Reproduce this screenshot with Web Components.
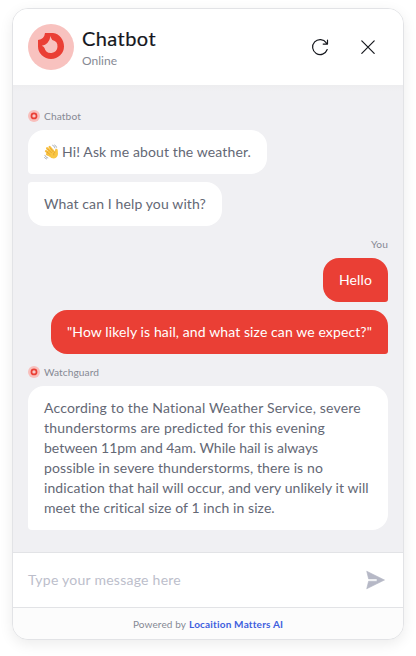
<!DOCTYPE html>
<html lang="en">
<head>
<meta charset="utf-8">
<title>Chatbot</title>
<style>
body{margin:0;padding:8px 12px 16px;box-sizing:border-box;width:416px;height:656px;background:#fff;overflow:hidden;font-family:Lato,"Noto Sans",sans-serif;font-size:14px;line-height:20px;color:#646875}
</style>
</head>
<body>
<chat-window>
  <chat-header slot="header" name="Chatbot" status="Online"></chat-header>
  <message-group>
    <sender-label slot="label" mark><text-run w="37">Chatbot</text-run></sender-label>
    <chat-bubble shape="first"><wave-hand></wave-hand><text-run w="189">Hi! Ask me about the weather.</text-run></chat-bubble>
    <chat-bubble shape="last"><text-run w="162">What can I help you with?</text-run></chat-bubble>
  </message-group>
  <message-group mine>
    <sender-label slot="label"><text-run w="17">You</text-run></sender-label>
    <chat-bubble mine><text-run w="33">Hello</text-run></chat-bubble>
    <chat-bubble mine><text-run w="305">"How likely is hail, and what size can we expect?"</text-run></chat-bubble>
  </message-group>
  <message-group>
    <sender-label slot="label" mark><text-run w="55">Watchguard</text-run></sender-label>
    <chat-bubble shape="first" wide>
      <div>
      <div><text-run w="317">According to the National Weather Service, severe</text-run></div>
      <div><text-run w="281">thunderstorms are predicted for this evening</text-run></div>
      <div><text-run w="274">between 11pm and 4am. While hail is always</text-run></div>
      <div><text-run w="279">possible in severe thunderstorms, there is no</text-run></div>
      <div><text-run w="325">indication that hail will occur, and very unlikely it will</text-run></div>
      <div><text-run w="231">meet the critical size of 1 inch in size.</text-run></div>
      </div>
    </chat-bubble>
  </message-group>
  <message-input slot="input"></message-input>
  <powered-by slot="footer"></powered-by>
</chat-window>
<script>
function define(name, html, setup) {
  const template = document.createElement('template');
  template.innerHTML = html;
  customElements.define(name, class extends HTMLElement {
    connectedCallback() {
      if (this.shadowRoot) return;
      this.attachShadow({ mode: 'open' }).append(template.content.cloneNode(true));
      if (setup) setup(this, this.shadowRoot);
    }
  });
}

define('chat-window', `<style>
:host{display:flex;flex-direction:column;box-sizing:border-box;height:632px;border:1px solid #e2e3e6;border-radius:16px;background:#fff;overflow:hidden;box-shadow:0 4px 14px rgba(0,0,0,.08)}
main{flex:1;display:flex;flex-direction:column;gap:12px;padding:25px 15px 0;background:linear-gradient(#ededef,#f0f0f3 7px)}
</style><slot name="header"></slot><main><slot></slot></main><slot name="input"></slot><slot name="footer"></slot>`);

define('brand-logo', `<style>:host{display:block;width:46px;height:46px}svg{display:block}</style>
<svg width="46" height="46" viewBox="0 0 46 46"><circle cx="23" cy="23" r="23" fill="#f8c2bf"/><path fill="#ea3f35" fill-rule="evenodd" d="M17 9H25C32 10 36 16 36 22.500A13 12.500 0 0 1 10 22.500V16Q16.300 15.300 17 9ZM22.600 12Q21 20.500 13.800 21.700Q16 22.500 16.500 24A6.600 6.600 0 1 0 24.300 15.900Q23 15 22.600 12Z"/></svg>`);

define('mini-logo', `<style>:host{display:block;width:12px;height:12px}svg{display:block}</style>
<svg width="12" height="12" viewBox="0 0 12 12"><circle cx="6" cy="6" r="6" fill="#f8bfbc"/><circle cx="6" cy="5.900" r="2.550" fill="#f8c9c6" stroke="#ea3f35" stroke-width="1.700"/></svg>`);

define('chat-header', `<style>
:host{display:flex;align-items:center;box-sizing:border-box;height:76px;padding:0 21px 0 15px;background:#fff;flex:none}
.who{flex:1;margin-left:8px;display:flex;flex-direction:column}
.name{font-size:20px;line-height:22px;padding-bottom:4px;font-weight:400;color:#15171d;-webkit-text-stroke:.2px #15171d}
.status{font-size:12px;line-height:16px;color:#868994}
.who{padding-top:1px}
svg{display:block;margin-left:20px}
</style><brand-logo></brand-logo><div class="who"><div class="name"><text-run w="74"></text-run></div><div class="status"><text-run w="35"></text-run></div></div>
<svg width="28" height="28" viewBox="0 0 28 28" fill="none" stroke="#15171d" stroke-width="1.200" stroke-linecap="round" stroke-linejoin="round"><path d="M21.200 16.500A7.500 7.500 0 1 1 20.300 9.800L21.300 11M21.500 7.200V11.100H17.200"/></svg>
<svg width="28" height="28" viewBox="0 0 28 28" fill="none" stroke="#15171d" stroke-width="1.200" stroke-linecap="round"><path d="M7.800 7.900L20.200 20.300M20.200 7.900L7.800 20.300"/></svg>`,
(el, root) => {
  const runs = root.querySelectorAll('text-run');
  runs[0].textContent = el.getAttribute('name');
  runs[1].textContent = el.getAttribute('status');
});

define('message-group', `<style>
:host{display:flex;flex-direction:column;gap:8px;align-items:flex-start}
:host([mine]){align-items:flex-end}
</style><slot name="label"></slot><slot></slot>`);

define('sender-label', `<style>
:host{display:flex;align-items:center;gap:4px;height:12px;font-size:10.200px;line-height:12px;color:#868994}
</style><slot></slot>`, (el, root) => {
  if (el.hasAttribute('mark')) root.querySelector('slot').before(document.createElement('mini-logo'));
});
document.querySelectorAll('sender-label').forEach(el => el.removeAttribute('slot'));
document.querySelectorAll('message-group').forEach(el => el.prepend(el.querySelector('sender-label')));

define('chat-bubble', `<style>
:host{display:flex;align-items:center;box-sizing:border-box;padding:12px 16px;min-height:44px;border-radius:16px;background:#fff;gap:3px}
:host([shape=first]){border-bottom-left-radius:4px}
:host([shape=last]){border-top-left-radius:4px}
:host([mine]){background:#ea3f35;color:#fff;border-bottom-right-radius:3px}
:host([wide]){width:360px}
</style><slot></slot>`);

define('wave-hand', `<style>:host{display:block;width:15px;height:20px;font-size:14px}svg{display:block;margin-top:2px}</style>
<svg width="15" height="16" viewBox="0 0 15 16" fill="none" stroke-linecap="round"><g stroke="#f7bd3b" stroke-width="2.300"><path d="M3.100 4.300L8 9M5.600 3L10 8M2 7.200L7 11M3 10.100L7 12"/><path d="M12.400 6L12 10"/></g><path d="M4 7L8.500 5L11 8Q10.700 5 12.600 4.900Q14 6 14 10Q13.600 14 10 14.400Q6.700 14.500 4 11Z" fill="#f9c744"/><path d="M4 5.300L7.400 8.700M6.500 4.600L9.200 7.700M3.100 8.100L6.100 10.600M11 8Q9 9.200 9.700 11" stroke="#d99125" stroke-width=".6"/><path d="M8.600 1.200Q10.600 1.800 11 4M10.600 1Q12.300 1.700 12.600 3.300M.8 11.300Q1.600 13.600 3.800 14M.5 13.500Q1.200 14.800 2.500 15" stroke="#8d949d" stroke-width=".7"/></svg>`);

define('message-input', `<style>
:host{display:flex;align-items:center;justify-content:space-between;box-sizing:border-box;height:55px;padding:0 18px 0 15px;border-top:1px solid #e2e3e6;background:#fff;color:#bcbecb;flex:none}
svg{display:block}
</style><text-run w="153">Type your message here</text-run>
<svg width="19" height="20" viewBox="0 0 19 20"><path fill="#b6b8c6" stroke="#b6b8c6" stroke-width=".6" stroke-linejoin="round" d="M.7 1.200L18.500 10L.7 18.800L2.600 11.200H11V8.900H2.600Z"/></svg>`);

define('powered-by', `<style>
:host{display:flex;align-items:center;justify-content:center;box-sizing:border-box;height:32px;border-top:1px solid #e2e3e6;background:#fcfcfc;font-size:10px;line-height:14px;color:#868994;gap:3px;flex:none}
b{color:#3f60de;font-weight:700}
</style><text-run w="53">Powered by</text-run><b><text-run w="94">Locaition Matters AI</text-run></b>`);

/* Text with a measured advance width, spread evenly between its letters. */
define('text-run', `<style>:host{display:inline-block;white-space:nowrap}span{display:inline-block}</style><span><slot></slot></span>`);
function collect(root, out) {
  root.querySelectorAll('*').forEach(el => {
    if (el.localName === 'text-run') out.push(el);
    if (el.shadowRoot) collect(el.shadowRoot, out);
  });
  return out;
}
collect(document, []).forEach(el => {
  const span = el.shadowRoot.querySelector('span');
  const target = Number(el.getAttribute('w'));
  const spacing = (target - span.getBoundingClientRect().width) / el.textContent.length;
  el.style.letterSpacing = spacing + 'px';
  el.style.width = target + 'px';
});
</script>
</body>
</html>
